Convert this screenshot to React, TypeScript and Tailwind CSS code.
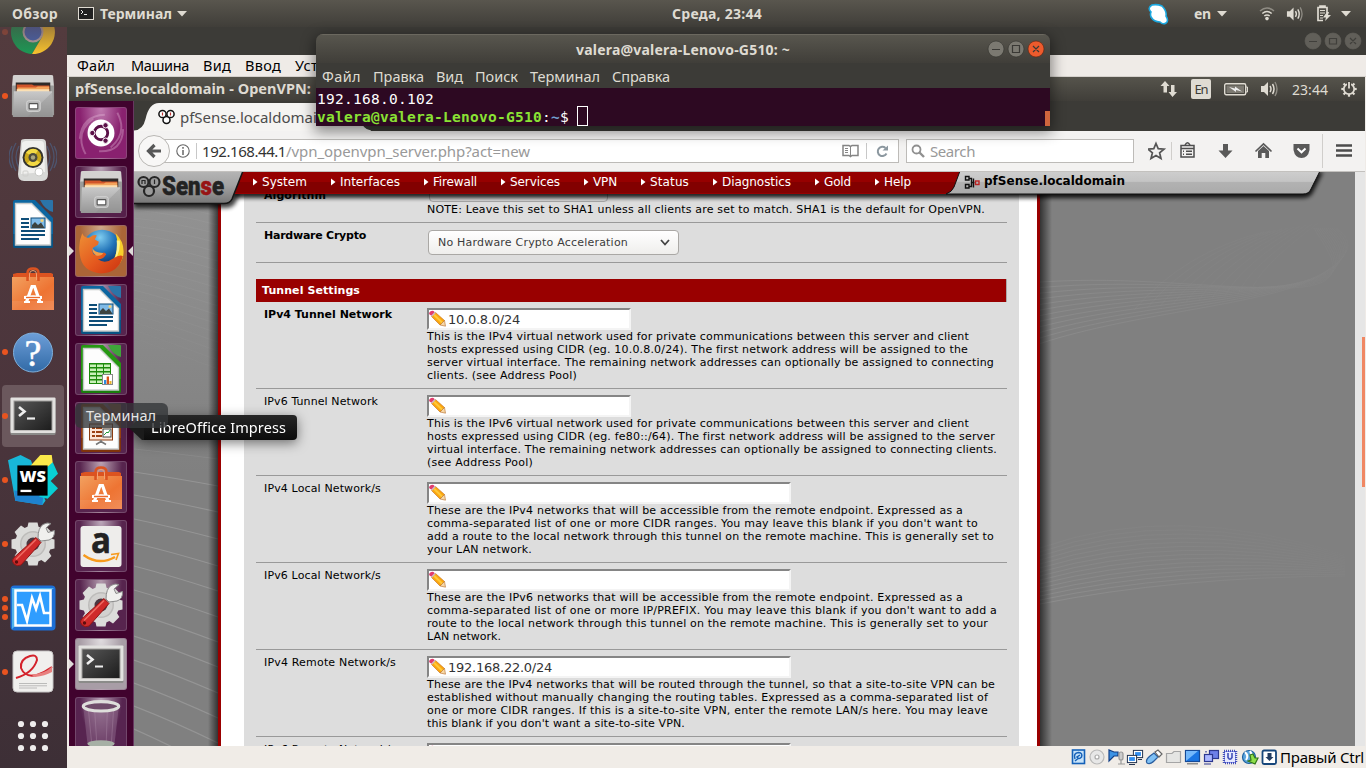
import React, { useLayoutEffect, useRef, useState } from "react";

/** Single line of text that spreads its letters to occupy a given width. */
function Fit({ w, t, className = "" }: { w: number; t: string; className?: string }) {
  const ref = useRef<HTMLSpanElement>(null);
  const [ls, setLs] = useState(0);
  useLayoutEffect(() => {
    if (ref.current) {
      const natural = ref.current.getBoundingClientRect().width;
      setLs((w - natural) / t.length);
    }
  }, []);
  return (
    <span className={"block shrink-0 whitespace-pre " + className} style={{ width: w }}>
      <span ref={ref} style={{ letterSpacing: ls }}>{t}</span>
    </span>
  );
}

const UI = "font-['Noto_Sans',sans-serif]";
const PAGE = "font-['DejaVu_Sans',sans-serif]";

/* ---------- application icons, 48 x 48 ---------- */

function Svg({ s = 44, children }: { s?: number; children: React.ReactNode }) {
  return <svg width={s} height={s} viewBox="0 0 48 48" className="block shrink-0">{children}</svg>;
}

function ChromeIcon() {
  return (
    <Svg s={48}>
      <path d="M24 24 L4.900 13 A22 22 0 0 1 43 13Z" fill="#d9442f" />
      <path d="M24 24 L4.900 13 A22 22 0 0 0 23 46 L33 29Z" fill="#1b9a55" />
      <path d="M43.500 14 H24 L33 29 L23 46 A22 22 0 0 0 43.500 14Z" fill="#f9c52e" />
      <circle cx="24" cy="24" r="10.500" fill="#b9a9a9" />
      <circle cx="24" cy="24" r="8.500" fill="#4767b5" />
    </Svg>
  );
}

function FilesIcon() {
  return (
    <Svg s={46}>
      <defs>
        <linearGradient id="fl" x1="0" y1="0" x2="0" y2="1"><stop offset="0" stopColor="#c9c9c9" /><stop offset="1" stopColor="#969696" /></linearGradient>
      </defs>
      <path d="M3 3 Q3 2 5 2 H43 Q45 2 45 3 L46 15 H2Z" fill="#d3d2d0" />
      <path d="M2 13 H46 V44 H2Z" fill="#9b9b99" />
      <path d="M6 10 H42 V20 H6Z" fill="#2f2a28" />
      <path d="M7 12 H23 L25 13 H41 V20 H7Z" fill="#d2552a" />
      <path d="M8 15 H27 L29 14 H41 V20 H7Z" fill="#f3a35b" />
      <path d="M7 17 H41 V20 H7Z" fill="#fbe0b4" />
      <path d="M4 19 H44 L45 46 H3Z" fill="url(#fl)" />
      <path d="M44 20 V45 L18 46Z" fill="#8b8b8b" opacity=".35" />
      <rect x="17.500" y="29" width="14" height="11" rx="2" fill="#b5b5b5" stroke="#d7d7d7" />
      <rect x="20" y="32" width="9" height="5.500" rx=".8" fill="#fff" stroke="#555" strokeWidth="1.200" />
    </Svg>
  );
}

function SpeakerIcon() {
  return (
    <Svg s={48}>
      <g fill="none" stroke="#4c5d7e" strokeWidth="1.300" opacity=".75">
        <path d="M7 7 Q-1 21 7 35M10 10 Q4 21 10 32M3 10 Q-3 21 3 32M41 7 Q49 21 41 35M38 10 Q44 21 38 32M45 10 Q51 21 45 32" />
      </g>
      <path d="M12 5 Q12 3 16 3 H33 Q37 3 37 7 L39 38 Q39 45 33 45 H15 Q9 45 9 38Z" fill="#d8d9d7" />
      <path d="M13 7 Q14 5 17 5 H32 Q35 5 35 9 L36 36 L12 38Z" fill="#f0f0ee" />
      <circle cx="24" cy="21.500" r="10.500" fill="#35352f" />
      <circle cx="24" cy="21.500" r="8.500" fill="#c9a71b" />
      <path d="M24 21.500 L17 16.500 A8.500 8.500 0 0 1 29 14.500ZM24 21.500 L31 26.500 A8.500 8.500 0 0 1 18 27.500Z" fill="#f2d944" />
      <circle cx="24" cy="21.500" r="4.500" fill="#4c4a3c" /><circle cx="24" cy="21.500" r="2.200" fill="#aaa67e" />
      <circle cx="30" cy="36" r="4" fill="#fff" stroke="#c9cac7" />
      <rect x="14" y="35" width="5" height="5" rx="1" fill="none" stroke="#cfcfcc" />
    </Svg>
  );
}

function DocIcon({ kind }: { kind: "writer" | "calc" | "impress" }) {
  const c = kind === "writer" ? "#0c66a0" : kind === "calc" ? "#259712" : "#97400f";
  const d = kind === "writer" ? "#06466f" : kind === "calc" ? "#14700a" : "#702c08";
  const tab = kind === "writer" ? "#2b74a8" : kind === "calc" ? "#3fa43a" : "#9b5a3a";
  return (
    <Svg s={48}>
      <path d="M6 0 H26 L44 18 V46 Q44 48 42 48 H6 Q4 48 4 46 V2 Q4 0 6 0Z" fill={c} />
      <path d="M4 34 H44 V46 Q44 48 42 48 H6 Q4 48 4 46Z" fill={d} opacity=".6" />
      <path d="M31 0 H43 Q44 0 44 1 V12 Q36 10 31 0Z" fill={tab} />
      <path d="M6.500 3.500 H22.500 L41.500 22.500 V45 H6.500Z" fill="#fdfdfd" stroke="#c6caca" strokeWidth="1.400" />
      {kind === "writer" && (
        <g fill="#0e4d78">
          <path d="M12 18h8v2h-8zM12 22h8v2h-8zM12 26h8v2h-8zM12 30h24v2H12zM12 34h24v2H12zM12 38h18v2H12z" />
          <rect x="22" y="18" width="14" height="10" fill="#7fbbe8" stroke="#0e4d78" />
          <path d="M23 28 V25 L26 22 L29 25 L32 22.500 L35 27 V28Z" fill="#3c4340" /><circle cx="33" cy="20.500" r="1.500" fill="#f0d27a" />
        </g>
      )}
      {kind === "calc" && (
        <g>
          <rect x="12" y="18" width="22" height="21" fill="#1c8a0b" />
          <path d="M13 19.500h6v2.500h-6zM20 19.500h6v2.500h-6zM27 19.500h6v2.500h-6zM13 23.500h6v2.500h-6zM20 23.500h6v2.500h-6zM27 23.500h6v2.500h-6zM13 27.500h6v2.500h-6zM20 27.500h6v2.500h-6zM27 27.500h6v2.500h-6zM13 31.500h6v2.500h-6zM20 31.500h6v2.500h-6zM13 35.500h6v2.500h-6zM20 35.500h6v2.500h-6z" fill="#c8f0b8" />
          <rect x="25.500" y="29.500" width="10" height="10" fill="#fff" stroke="#888" />
          <path d="M27 35h2.300v4H27z" fill="#2d8be0" /><path d="M29.700 31.500H32V39h-2.300z" fill="#d9541a" /><path d="M32.500 36h2v3h-2z" fill="#eab52a" />
        </g>
      )}
      {kind === "impress" && (
        <g>
          <rect x="12.500" y="20" width="23" height="16" fill="#fbe6d6" stroke="#8a3c12" />
          <path d="M15 23h3v2h-3zM15 27h3v2h-3zM15 31h3v2h-3zM19 23h6v2h-6zM19 27h6v2h-6zM19 31h6v2h-6z" fill="#9b4112" />
          <rect x="26" y="25" width="8" height="8" fill="#fff" stroke="#444" /><path d="M27 31l3-3 1 1 2-3" stroke="#259b3c" fill="none" />
          <path d="M24 36v3M24 37.500l-5 3M24 37.500l5 3" stroke="#777" strokeWidth="1.500" fill="none" />
        </g>
      )}
    </Svg>
  );
}

function BagIcon() {
  return (
    <Svg s={48}>
      <defs><linearGradient id="bg" x1="0" y1="0" x2="1" y2="1"><stop offset="0" stopColor="#f2a160" /><stop offset=".6" stopColor="#ee7433" /><stop offset="1" stopColor="#ef834b" /></linearGradient></defs>
      <path d="M4 10 L8 9 H42 L44 10 V16 H4Z" fill="#dc5320" />
      <path d="M3 13 H45 V46 H3Z" fill="url(#bg)" />
      <path d="M3 37 H45 V46 H3Z" fill="#fff" opacity=".08" />
      <path d="M18.500 17 V9 Q18.500 4.500 24 4.500 Q29.500 4.500 29.500 9 V17" fill="none" stroke="#dc5320" strokeWidth="2.500" />
      <path d="M20.500 16 V10 Q20.500 6.500 24 6.500 Q27.500 6.500 27.500 10 V16" fill="none" stroke="#f3a271" strokeWidth="1" />
      <path d="M17.500 38 L23 22.500 H25.500 L31 38" fill="none" stroke="#fff" strokeWidth="3.200" />
      <path d="M15 32 Q24 30.500 33 32 V35 H15Z" fill="#fff" /><path d="M17 33.500h14" stroke="#ec6a2c" strokeWidth="1.300" />
      <path d="M15 38h6M28 38h6" stroke="#fff" strokeWidth="2" />
    </Svg>
  );
}

function HelpIcon() {
  return (
    <Svg s={48}>
      <defs><linearGradient id="hp" x1="0" y1="0" x2="0" y2="1"><stop offset="0" stopColor="#6d9ed8" /><stop offset="1" stopColor="#316aa6" /></linearGradient></defs>
      <circle cx="24" cy="24.500" r="19.500" fill="url(#hp)" stroke="#7fb0dc" />
      <text x="24" y="37.500" fontSize="38" textAnchor="middle" fill="#fff" stroke="#fff" strokeWidth=".5" fontFamily="Liberation Serif">?</text>
    </Svg>
  );
}

function TermIcon() {
  return (
    <Svg s={48}>
      <defs><linearGradient id="tm" x1="0" y1="0" x2="1" y2="1"><stop offset="0" stopColor="#565656" /><stop offset="1" stopColor="#1d1d1d" /></linearGradient></defs>
      <rect x="1.500" y="6" width="45" height="37" rx="1.500" fill="#8b8b89" />
      <rect x="1.500" y="5.500" width="45" height="35.500" rx="1" fill="#e2e1df" />
      <rect x="4.500" y="8.500" width="39" height="30" fill="#9d9c9a" />
      <rect x="5.500" y="9.500" width="37" height="28.500" fill="url(#tm)" />
      <path d="M10 15 L15.500 19.500 L10 24" fill="none" stroke="#eee" strokeWidth="2.600" /><path d="M18 26.500 H26" stroke="#eee" strokeWidth="2.200" />
    </Svg>
  );
}

function WebStormIcon() {
  return (
    <Svg s={50}>
      <path d="M0 5 L12 0 L22 5 L36 44 L33 48 L7 44Z" fill="#18b7d8" />
      <path d="M6 34 L34 38 L33 48 L7 44Z" fill="#1e82cf" />
      <path d="M21 11 L31 0 H42 L43 8 L38 14Z" fill="#fbe94a" />
      <path d="M37 12 L43 7 L48 18 L41 25 L48 32 L38 42 L30 40Z" fill="#08cfd4" />
      <rect x="9" y="10" width="29" height="29" fill="#000" />
      <text x="11" y="26" fontSize="15" fontWeight="800" fill="#fff" textLength="25.500" lengthAdjust="spacingAndGlyphs" fontFamily="Open Sans">WS</text>
      <path d="M12 34.500 H22.500" stroke="#fff" strokeWidth="2.200" />
    </Svg>
  );
}

const teeth = [0, 45, 90, 135, 180, 225, 270, 315];
function ToolsIcon() {
  return (
    <Svg s={48}>
      <g fill="#dcdcda">
        {teeth.map((a) => <path key={a} d="M18 9 L19.500 2.500 H28.500 L30 9Z" transform={`rotate(${a} 24 24)`} />)}
        <circle cx="24" cy="24" r="18" />
      </g>
      <circle cx="24" cy="24" r="13" fill="#bdbcba" /><circle cx="24" cy="24" r="11.500" fill="#d2d1cf" />
      <circle cx="24" cy="24" r="6.500" fill="#4b3841" />
      <path d="M29 18 Q29 8 34 4.500 Q38 2 42 3.500 L37 8 L39 12.500 L45.500 10.500 Q46 18 40 20 L32 21Z" fill="#f0f0ee" stroke="#8b8b8b" />
      <path d="M27 17.500 L32 22.500 L12 45 Q8 47 5 44 Q2 41 4.500 38Z" fill="#cf2a2a" stroke="#8e1717" />
      <path d="M27 19.500 L7 39.500" stroke="#ef6a62" strokeWidth="1.600" /><circle cx="7.500" cy="42" r="1.700" fill="#5d0e0e" />
    </Svg>
  );
}

function VBoxIcon() {
  return (
    <Svg s={48}>
      <rect x="1.500" y="1.500" width="45" height="45" rx="4" fill="#1d6fd6" />
      <path d="M3 4 H45 L40 8 H8 V40 L3 45Z" fill="#4fb3ee" />
      <rect x="6.500" y="6.500" width="35" height="35" fill="#2f9dff" stroke="#fff" strokeWidth="2.500" />
      <path d="M8 21 H13 L18 37 L23 14 L27 25 L31 12 L35 29 H41" fill="none" stroke="#fff" strokeWidth="2.600" />
    </Svg>
  );
}

function PdfIcon() {
  return (
    <Svg s={48}>
      <rect x="4" y="3" width="40" height="41" rx="4" fill="#f0efed" stroke="#c6c4c4" />
      <path d="M7 30 Q24 25 28 12 Q28 6 21 8 Q11 11 12 20 Q16 30 28 27 Q36 24 43 19" fill="none" stroke="#d4232c" strokeWidth="2" />
      <path d="M22 26.500 Q36 26 43 18.500 V24 Q36 28 26 29Z" fill="#e8807f" />
      <path d="M10 35.500h28M10 37.800h28M10 40h18" stroke="#b4b4b4" strokeWidth=".9" />
    </Svg>
  );
}

function AppsIcon() {
  return (
    <Svg s={48}>{[12, 24, 36].map((x) => [12, 24, 36].map((y) => <circle key={x + "-" + y} cx={x} cy={y} r="3.100" fill="#eeecec" />))}</Svg>
  );
}

function UbuntuIcon() {
  return (
    <svg width="52" height="52" viewBox="0 0 52 52" className="block">
      <g fill="none" stroke="#e9bfdc" opacity=".35"><path d="M4 32 Q6 8 30 7M10 48 Q-2 26 18 11M49 22 Q48 46 24 45M43 5 Q54 26 36 41" strokeWidth="2" /></g>
      <circle cx="26" cy="26" r="14" fill="#fff" />
      <circle cx="26" cy="26" r="7" fill="none" stroke="#5b1148" strokeWidth="3" />
      <g fill="#5b1148" stroke="#fff" strokeWidth="1"><circle cx="17" cy="26" r="2.800" /><circle cx="30.700" cy="18" r="2.800" /><circle cx="30.700" cy="34" r="2.800" /></g>
    </svg>
  );
}

function FirefoxIcon() {
  return (
    <Svg s={50}>
      <defs>
        <radialGradient id="ffb" cx=".45" cy=".2" r=".75"><stop offset="0" stopColor="#7fcdf0" /><stop offset=".5" stopColor="#2273b8" /><stop offset="1" stopColor="#0b2a62" /></radialGradient>
        <linearGradient id="ffo" x1="0" y1="0" x2="1" y2="1"><stop offset="0" stopColor="#ee8f35" /><stop offset=".55" stopColor="#e4581e" /><stop offset="1" stopColor="#c9300f" /></linearGradient>
      </defs>
      <circle cx="25" cy="22.500" r="19" fill="url(#ffb)" />
      <path d="M38 7 Q48 17 45 30 Q40 44 26 44 Q35 40 37 30 Q42 20 38 7Z" fill="#f9cf2b" />
      <path d="M42 14 Q43 25 37 33 Q40 21 39 14Z" fill="#fff38a" />
      <path d="M6 7 Q8 12 13 11 Q17 8 20 9 L18 13 L22 15 L21 18 L16 21 Q15 24 17 27 Q20 29 24 27 Q27 24 29 27 Q27 32 21 32 Q28 37 36 31 Q42 27 45 29 Q41 45 24 45.500 Q5 44 3.500 26 Q2 16 6 7Z" fill="url(#ffo)" />
      <path d="M16 21 Q17 25 26 26 Q25 29 20 28.500 Q15 26 16 21Z" fill="#f3a04a" />
    </Svg>
  );
}

function AmazonIcon() {
  return (
    <Svg s={48}>
      <rect x="3.500" y="4" width="41" height="41" rx="3" fill="#eeedeb" />
      <text x="14" y="30.500" textLength="20" lengthAdjust="spacingAndGlyphs" fontSize="36" fontWeight="700" fill="#222" stroke="#222" strokeWidth=".6" fontFamily="Open Sans">a</text>
      <path d="M6.500 33 Q22 44 38 35" fill="none" stroke="#f79a1d" strokeWidth="2.400" /><path d="M34 32.500 L41.500 31.500 L39 38" fill="none" stroke="#f79a1d" strokeWidth="1.600" />
    </Svg>
  );
}

function TrashIcon() {
  return (
    <Svg s={50}>
      <path d="M7 9 L11 44 Q24 51 37 44 L41 9Z" fill="#8a6586" opacity=".55" />
      <path d="M12 12 L15 43M18 13 L20 44M30 13 L29 44M36 12 L34 43" stroke="#b394ae" opacity=".35" />
      <ellipse cx="24" cy="44" rx="13" ry="3.500" fill="#a6b0a5" />
      <ellipse cx="24" cy="8" rx="17" ry="4.500" fill="#6f4c6a" stroke="#dededb" strokeWidth="3" />
    </Svg>
  );
}

/* ---------- small symbols ---------- */

function Caret() {
  return <svg width="10" height="6" className="block shrink-0"><path d="M0 0H10L5 5.500Z" fill="#dfdbd2" /></svg>;
}

function Volume({ w = 18 }: { w?: number }) {
  return (
    <svg width={w} height="16" viewBox="0 0 18 16" className="block shrink-0">
      <path d="M1 5h3l4-4v14l-4-4H1Z" fill="#dfdbd2" />
      <path d="M10 5Q12 8 10 11M12.500 3Q15.500 8 12.500 13" fill="none" stroke="#dfdbd2" strokeWidth="1.500" />
      <path d="M15 1Q19 8 15 15" fill="none" stroke="#8f8c84" strokeWidth="1.400" />
    </svg>
  );
}

function Pencil() {
  return (
    <svg width="18" height="18" viewBox="0 0 18 18" className="block shrink-0">
      <path d="M0 3 Q2 0 4.500 1 L6 2.500 L3 6 L.5 4.500Z" fill="#e23b6d" />
      <path d="M2.500 6.500 L6.500 2.500 L15.500 10.500 L11 15Z" fill="#fba70f" stroke="#c06a1d" strokeWidth=".6" />
      <path d="M5 4.800 L13.300 12.800" stroke="#ffc93a" strokeWidth="2" />
      <path d="M11 15 L15.500 10.500 L16.500 16.200Z" fill="#f7d9a8" stroke="#b36a2a" strokeWidth=".6" />
      <path d="M2.500 6.300 L6.300 2.300" stroke="#cdb9c4" strokeWidth="1.300" />
    </svg>
  );
}

function WinButtons({ active }: { active?: boolean }) {
  const fill = active ? "#7b7971" : "#615f59";
  const ink = active ? "#3a3935" : "#403f3b";
  return (
    <svg width="58" height="18" viewBox="0 0 58 18" className="block">
      <circle cx="9" cy="9" r="8" fill={fill} stroke={active ? "#33322e" : fill} strokeWidth=".6" /><circle cx="29" cy="9" r="8" fill={fill} stroke={active ? "#33322e" : fill} strokeWidth=".6" />
      <circle cx="49" cy="9" r="8" fill={active ? "#ed5b2d" : fill} stroke={active ? "#5e2413" : fill} strokeWidth=".6" />
      <path d={active ? "M5 9.500h8M25.500 5.500h7v7h-7ZM46 6l6 6M52 6l-6 6" : "M5 9.500h8M25.500 6.500h7v5.500h-7ZM46 6l6 6M52 6l-6 6"} fill="none" stroke={ink} strokeWidth="1.200" />
    </svg>
  );
}

function Rings() {
  return (
    <svg width="17" height="16" viewBox="0 0 17 16" className="block shrink-0">
      <g fill="#fff" stroke="#111" strokeWidth="1.500"><circle cx="8.500" cy="11" r="3.500" /><circle cx="4.500" cy="5" r="3.600" /><circle cx="12.500" cy="5" r="3.600" /></g>
      <path d="M4.500 3.500v3M12.500 3.500v3" stroke="#b33" strokeWidth="1.200" />
    </svg>
  );
}

/* ---------- host desktop ---------- */

function TopBar() {
  return (
    <div className={"flex h-[27px] shrink-0 items-center bg-linear-to-b from-[#59564e] to-[#403e39] text-[14px] font-bold text-[#dfdbd2] " + UI}>
      <Fit w={46} t="Обзор" className="ml-3" />
      <svg width="16" height="13" className="ml-5 block"><rect x=".5" y=".5" width="15" height="12" fill="#222" stroke="#dfdbd2" /><path d="M3 3l2 2-2 2M6 7.500h3" stroke="#eee" fill="none" /></svg>
      <Fit w={72} t="Терминал" className="ml-1.5" />
      <div className="ml-[5px]"><Caret /></div>
      <Fit w={90} t="Среда, 23:44" className="ml-[485px]" />
      <svg width="24" height="24" viewBox="0 0 24 24" className="ml-[384px] block"><path d="M6 3Q11 2 16 4Q21 9 20 14Q23 19 20 21Q17 23 14 20Q8 20 5 15Q4 12 5 10Q1 6 6 3Z" fill="#fff" stroke="#1ba8e0" strokeWidth="1.600" /></svg>
      <Fit w={17} t="en" className="ml-6" />
      <div className="ml-1.5"><Caret /></div>
      <svg width="16" height="14" viewBox="0 0 16 14" className="ml-8 block"><g fill="none" stroke="#8f8c84" strokeWidth="1.500"><path d="M1 4Q8-2 15 4" /></g><path d="M3.300 6.500Q8 2.500 12.700 6.500M5.300 9Q8 6.800 10.700 9" fill="none" stroke="#dfdbd2" strokeWidth="1.500" /><circle cx="8" cy="11.600" r="1.800" fill="#dfdbd2" /></svg>
      <div className="ml-[11px]"><Volume w={17} /></div>
      <svg width="16" height="17" viewBox="0 0 16 17" className="ml-[13px] block"><path d="M4 2.500V1h5v1.500h2V8M7 15.500H2v-13h9" fill="none" stroke="#dfdbd2" strokeWidth="1.700" /><path d="M4 5.500h5M4 8h5M4 10.500h3M4 13h3" stroke="#dfdbd2" strokeWidth="1.200" /><path d="M11 7L7 12.500h3L9 16l6-6h-3l1-3Z" fill="#dfdbd2" /></svg>
      <div className="ml-[9px]"><Caret /></div>
    </div>
  );
}

const dock: { icon: React.ReactNode; dots: number; active?: boolean }[] = [
  { icon: <ChromeIcon />, dots: 1 }, { icon: <FilesIcon />, dots: 1 }, { icon: <SpeakerIcon />, dots: 0 },
  { icon: <DocIcon kind="writer" />, dots: 0 }, { icon: <BagIcon />, dots: 0 }, { icon: <HelpIcon />, dots: 1 },
  { icon: <TermIcon />, dots: 1, active: true }, { icon: <WebStormIcon />, dots: 1 }, { icon: <ToolsIcon />, dots: 1 },
  { icon: <VBoxIcon />, dots: 3 }, { icon: <PdfIcon />, dots: 1 }, { icon: <AppsIcon />, dots: 0 },
];

function Dock() {
  return (
    <div className="relative w-[67px] shrink-0 overflow-hidden bg-linear-to-b from-[#533b3e] via-[#4b353c] to-[#3d2f36]">
      <div className="-mt-[27px] flex flex-col">
        {dock.map((d, i) => (
          <div key={i} className="flex h-16 items-center">
            <div className={"relative ml-0.5 flex h-[62px] w-[62px] items-center justify-center rounded-[4px] " + (d.active ? "bg-[#6b585d]" : "")}>
              <div className="absolute left-0 flex flex-col gap-[3px]">
                {Array.from({ length: d.dots }).map((_, k) => <div key={k} className={"size-1.5 rounded-full " + (i === 0 ? "bg-[#9b4a37]" : "bg-[#e95420]")} />)}
              </div>
              {d.icon}
            </div>
          </div>
        ))}
      </div>
      <div className="absolute inset-x-0 top-0 h-7 bg-linear-to-b from-[#533b3e]/50 to-transparent" />
    </div>
  );
}

function StatusBar() {
  return (
    <div className={"flex h-[22px] items-center bg-[#f0ece7] pl-[1003px] text-[15px] text-black " + UI}>
      <svg width="209" height="18" viewBox="0 0 209 18" className="block shrink-0">
        <g strokeWidth="1.200">
          <rect x="2.500" y="2" width="12" height="13.500" fill="#c7e3fa" stroke="#1561b8" strokeWidth="1.600" /><path d="M5 11Q3 5 8.500 4.500Q13 5 11.500 9Q9 12 7 9L10 7M5 13L8 10.500" fill="none" stroke="#1561b8" strokeWidth="1.500" />
          <circle cx="27" cy="9" r="7" fill="#e7e7e7" stroke="#b9b9b9" /><circle cx="27" cy="9" r="2" fill="#fff" stroke="#aaa" />
          <path d="M39 2v11l5-5h4V4h-4Z" fill="#3c92e4" stroke="#143f85" /><rect x="49" y="4" width="4" height="8" rx="2" fill="#ccc" stroke="#999" /><path d="M51 12v4M48 16h7" stroke="#999" />
          <rect x="63.500" y="2.500" width="9" height="7" fill="#2f8df0" stroke="#23334f" /><rect x="64.500" y="3.500" width="7" height="5" fill="none" stroke="#fff" /><rect x="57.500" y="7.500" width="9" height="7" fill="#2f8df0" stroke="#23334f" /><rect x="58.500" y="8.500" width="7" height="5" fill="none" stroke="#fff" /><path d="M59 16.500h6M68 11.500h4" stroke="#23334f" />
          <path d="M77 15Q75 12 80 8L84 5L88 9L84 13Q80 17 77 15Z" fill="#7fc0f4" stroke="#2b5fa0" /><path d="M85 4l3-2 4 4-3 3Z" fill="#fff" stroke="#666" />
          <path d="M96.500 14.500V5.500H102L104 3.500H110.500V14.500Z" fill="#e5e5e3" stroke="#a5a5a5" />
          <rect x="115.500" y="2.500" width="14" height="11" fill="#1a76e4" stroke="#164a97" /><path d="M116 13V3H128Z" fill="#74b8fb" /><path d="M117 15.800h11" stroke="#777" />
          <rect x="139.500" y="2.500" width="9" height="8" fill="#6d7fe8" stroke="#2c378f" /><rect x="134.500" y="6.500" width="8" height="7" fill="#aab6ff" stroke="#2c378f" /><path d="M136 4.500v-1.500M134 16h7" stroke="#2c378f" />
          <rect x="154" y="3" width="12" height="12" fill="#8793f2" stroke="#4450b7" strokeDasharray="1 1" strokeWidth="2.500" /><rect x="155" y="4" width="10" height="10" fill="#e6e9ff" /><path d="M158 5v4.500Q160 13 162 9.500V5" fill="none" stroke="#4450b7" strokeWidth="1.600" />
          <circle cx="179" cy="9" r="6.500" fill="#5da6df" stroke="#1c609f" /><path d="M175 4Q179 8 176 12M180 3l2 4" stroke="#fff" fill="none" strokeWidth="2" /><path d="M180 7l3-1 2 4h3l-3 6-7-3 3-1Z" fill="#8fe04a" stroke="#33761b" />
          <rect x="192.500" y="2.500" width="13.500" height="13.500" rx="1.500" fill="#fff" stroke="#16467b" strokeWidth="1.800" /><path d="M197.500 5h4v4h2l-4 4-4-4h2Z" fill="#223c60" />
        </g>
      </svg>
      <Fit w={84} t="Правый Ctrl" className="ml-px" />
    </div>
  );
}

/* ---------- guest desktop ---------- */

function GuestPanel() {
  return (
    <div className={"flex h-6 shrink-0 items-center bg-linear-to-b from-[#56544c] to-[#403e39] pl-1.5 text-[15px] text-[#dfdbd2] " + UI}>
      <Fit w={236} t="pfSense.localdomain - OpenVPN:" className="font-bold text-[14.5px]" />
      <svg width="20" height="18" viewBox="0 0 20 18" className="ml-[848px] block"><path d="M6 1L1.500 6H4.500V12.500H8V6H10.500ZM13.500 17L9.500 12H12V5H15.500V12H18Z" fill="#dfdbd2" /></svg>
      <div className="ml-[12px] flex h-5 w-5 items-center justify-center rounded-[2px] bg-[#dfdbd2] pt-0.5 text-[#3c3b37]"><Fit w={13} t="En" className="text-[13px]" /></div>
      <svg width="25" height="13" viewBox="0 0 25 13" className="ml-[13px] block"><rect x=".7" y=".7" width="21" height="11" rx="1.500" fill="none" stroke="#dfdbd2" strokeWidth="1.400" /><rect x="2.500" y="2.500" width="17.500" height="7.500" fill="#7d7a72" /><path d="M22 4h1.500v5H22" fill="none" stroke="#dfdbd2" /><path d="M5 4l6 1.500V3.500l7 5-6-1.500v2Z" fill="#eee" /></svg>
      <div className="ml-[10px]"><Volume w={20} /></div>
      <Fit w={36} t="23:44" className="ml-[13px] text-[14px]" />
      <svg width="16" height="16" viewBox="0 0 16 16" className="ml-[13px] block">
        <circle cx="8" cy="8" r="5.200" fill="none" stroke="#dfdbd2" strokeWidth="1.800" />
        <g stroke="#dfdbd2" strokeWidth="2.200">{teeth.slice(1).map((a) => <path key={a} d="M8 2.800V.3" transform={`rotate(${a} 8 8)`} />)}</g>
        <path d="M8 0v6" stroke="#45433d" strokeWidth="4" /><path d="M8 1v6.500" stroke="#dfdbd2" strokeWidth="1.800" />
      </svg>
    </div>
  );
}

const tiles: { icon: React.ReactNode; bg: string }[] = [
  { icon: <UbuntuIcon />, bg: "from-[#c07bb0] to-[#89216f]" },
  { icon: <FilesIcon />, bg: "from-[#b9a4b6] to-[#55204a]" },
  { icon: <FirefoxIcon />, bg: "from-[#cfa98b] to-[#aa6537]" },
  { icon: <DocIcon kind="writer" />, bg: "from-[#a591ae] to-[#57244e]" },
  { icon: <DocIcon kind="calc" />, bg: "from-[#b39cae] to-[#57244e]" },
  { icon: <DocIcon kind="impress" />, bg: "from-[#a08196] to-[#57244e]" },
  { icon: <BagIcon />, bg: "from-[#bca3b3] to-[#57244e]" },
  { icon: <AmazonIcon />, bg: "from-[#bdaabb] to-[#57244e]" },
  { icon: <ToolsIcon />, bg: "from-[#b39cae] to-[#57244e]" },
  { icon: <TermIcon />, bg: "from-[#e0dcdf] to-[#a89da6]" },
  { icon: <TrashIcon />, bg: "from-[#b9a1b6] to-[#572450]" },
];

function Launcher() {
  return (
    <div className="relative w-[65px] shrink-0 overflow-hidden border-r border-[#673760] bg-[#41032e]">
      <div className="flex flex-col gap-[7px] pt-1.5 pl-1.5">
        {tiles.map((t, i) => (
          <div key={i} className={"flex size-[52px] shrink-0 items-center justify-center overflow-hidden rounded-[3px] border border-[#8d6a86]/50 bg-radial-[at_50%_0%] to-60% " + t.bg}>{t.icon}</div>
        ))}
      </div>
      <svg width="64" height="645" className="absolute inset-0"><path d="M0 145L5 150L0 155ZM64 145L59 150L64 155ZM0 558L5 563L0 568Z" fill="#dedbd9" /></svg>
    </div>
  );
}

function Browser() {
  return (
    <div className={"shrink-0 " + UI}>
      <div className="h-[30px] bg-[#3c3b37]">
        <div className="relative">
          <svg width="240" height="30" className="absolute left-0 top-0"><path d="M0 29.500Q9 29 11.500 18Q15 2 25 2H210Q222 2 225 16Q229 29 237 29.500V30H0Z" fill="#f5f4f2" /></svg>
          <div className="relative flex h-8 items-center pl-6 text-[15px] text-[#4c4c4c]"><Rings /><Fit w={146} t="pfSense.localdomain" className="ml-[5px]" /></div>
        </div>
      </div>
      <div className="flex h-[41px] items-center border-b border-[#c3c1be] bg-[#f3f2f1] text-[15px]">
        <div className="relative z-10 ml-1 flex size-8 items-center justify-center rounded-full border border-[#b9b7b4] bg-[#f8f7f6]">
          <svg width="16" height="16" viewBox="0 0 16 16"><path d="M8.500 2L2.500 8L8.500 14M3 8H15" fill="none" stroke="#575757" strokeWidth="3.200" /></svg>
        </div>
        <div className="-ml-2 flex h-6 w-[737px] items-center border border-[#bdbbb8] bg-white pl-[13px]">
          <svg width="14" height="14" viewBox="0 0 14 14" className="block"><circle cx="7" cy="7" r="6.200" fill="none" stroke="#666" strokeWidth="1.100" /><path d="M7 3v1.800M7 6v5" stroke="#666" strokeWidth="1.500" /></svg>
          <div className="ml-[6px] h-4 w-px bg-[#c8c8c8]" />
          <Fit w={84} t="192.168.44.1" className="ml-[5px] text-[#333]" />
          <Fit w={244} t="/vpn_openvpn_server.php?act=new" className="text-[#999]" />
          <svg width="17" height="14" viewBox="0 0 17 14" className="ml-[312px] block"><path d="M1 1.500H7L8.500 2.500L10 1.500H16V11.500H10L8.500 12.500L7 11.500H1Z" fill="none" stroke="#858585" strokeWidth="1.500" /><path d="M8.500 3V12M3 4.500h3M3 6.500h3M3 8.500h3" stroke="#858585" /></svg>
          <div className="ml-[7px] h-4 w-px bg-[#c8c8c8]" />
          <svg width="13" height="13" viewBox="0 0 13 13" className="ml-[9px] block"><path d="M10.500 8.500A4.600 4.600 0 1 1 9.500 3" fill="none" stroke="#8c98a0" strokeWidth="2" /><path d="M6.500 5.500H12V.5Z" fill="#8c98a0" /></svg>
        </div>
        <div className="ml-[7px] flex h-6 w-[228px] items-center border border-[#bdbbb8] bg-white pl-1">
          <svg width="14" height="14" viewBox="0 0 14 14" className="block"><circle cx="5.500" cy="5.500" r="4" fill="none" stroke="#909090" strokeWidth="1.800" /><path d="M8.500 8.500L13 13" stroke="#909090" strokeWidth="2.400" /></svg>
          <Fit w={45} t="Search" className="ml-[5px] text-[#999]" />
        </div>
        <svg width="206" height="34" viewBox="0 0 206 34" className="ml-3.5 block">
          <path d="M8 10L10.200 15.200L16 15.700L11.600 19.300L13 25L8 22L3 25L4.400 19.300L0 15.700L5.800 15.200Z" transform="translate(0,-.5)" fill="none" stroke="#555" strokeWidth="1.700" />
          <path d="M23.500 8v18M174.500 0v34" stroke="#d0cecb" />
          <path d="M33 11.500H46V23H33ZM37 11Q39.500 6.500 42 11M33 14.500h13M35 17.300h1M38 17.300h6M35 20.300h1M38 20.300h6" fill="none" stroke="#4e4e4e" strokeWidth="1.500" />
          <path d="M75 10H80V16.500H84.500L77.500 24L70.500 16.500H75Z" fill="#595959" />
          <path d="M107.500 17.500L115.500 10L123.500 17.500" fill="none" stroke="#595959" strokeWidth="1.700" /><path d="M110 17L115.500 12L121 17V24H117.300V19H113.700V24H110Z" fill="#595959" />
          <path d="M145.500 10H161.500V16Q160 24 153.500 24Q147 24 145.500 16Z" fill="#595959" /><path d="M149.500 14.500L153.500 18.300L157.500 14.500" fill="none" stroke="#fff" strokeWidth="2" />
          <path d="M188 11.500H204M188 16.500H204M188 21.500H204" stroke="#4c4c4c" strokeWidth="2.400" />
        </svg>
      </div>
    </div>
  );
}

const leftLines = [[729, 42], [706, 37], [683, 35], [660, 33], [636, 31], [613, 29], [590, 27], [566, 25], [543, 23], [519, 20], [495, 17], [472, 14], [449, 10], [426, 6]];

function Backdrop() {
  return (
    <svg width="1221" height="574" className="absolute inset-0">
      <defs>
        <linearGradient id="shR" x1="0" x2="1"><stop offset="0" stopColor="#000" stopOpacity=".6" /><stop offset="1" stopColor="#000" stopOpacity="0" /></linearGradient>
        <linearGradient id="topL" x1="0" x2="0" y1="0" y2="1"><stop offset="0" stopColor="#949494" /><stop offset="1" stopColor="#808080" /></linearGradient>
        <linearGradient id="fade" x1="906" x2="1210" y1="0" y2="0" gradientUnits="userSpaceOnUse"><stop offset="0" stopColor="#929292" /><stop offset="1" stopColor="#838383" /></linearGradient>
      </defs>
      <rect width="1221" height="574" fill="#808080" />
      <rect width="84" height="300" fill="url(#topL)" />
      <g fill="none" stroke="#979797" strokeWidth="1">
        {leftLines.map(([y, d], i) => <path key={y} d={`M0 ${y - 172}Q40 ${y - 172 + d * 0.42} 84 ${y - 172 + d}`} strokeWidth="1.200" opacity={i > 11 ? 0.4 : 0.9} />)}
        {Array.from({ length: 19 }).map((_, i) => <path key={i} d={`M0 ${22 + i * 8}Q40 ${24 + i * 8.700} 84 ${35 + i * 9}`} opacity={0.7 - i * 0.03} />)}
      </g>
      <g fill="none" stroke="url(#fade)" strokeWidth=".8">
        {Array.from({ length: 12 }).map((_, i) => <path key={"a" + i} d={`M906 ${110 + i * 5.600}C1000 ${104 + i * 3.300} ${1070 + i * 6} ${116 + i * 1.500} ${1150 + i * 3} ${116 - i}S${1190 + i * 2} ${75 - i} ${1180 + i * 2} 56`} opacity=".7" />)}
        {Array.from({ length: 10 }).map((_, i) => <path key={"b" + i} d={`M${1000 + i * 13} ${138 - i * 2}Q${1050 + i * 8} ${80 + i * 2} ${1130 + i * 6} ${60 - i}`} opacity=".3" />)}
        {Array.from({ length: 15 }).map((_, i) => <path key={"c" + i} d={`M906 ${432 - i * 4}Q${1040} ${405 - i * 5.500} 1211 ${404 - i * 1.500}`} opacity={0.9 - i * 0.045} />)}
      </g>
      <rect x="74" y="20" width="10" height="554" fill="url(#shR)" transform="rotate(180 79 297)" />
      <rect x="906" y="20" width="12" height="554" fill="url(#shR)" />
    </svg>
  );
}

const nav: [string, number][] = [
  ["System", 45], ["Interfaces", 60], ["Firewall", 44], ["Services", 50], ["VPN", 24],
  ["Status", 39], ["Diagnostics", 69], ["Gold", 27], ["Help", 27],
];

function SiteHeader() {
  return (
    <div className={"absolute inset-x-0 top-0 h-10 " + PAGE}>
      <svg width="1221" height="44" className="absolute inset-0">
        <defs>
          <filter id="sh" x="-5%" y="-20%" width="110%" height="180%"><feGaussianBlur stdDeviation="2" /></filter>
          <linearGradient id="gl" x1="0" y1="0" x2="0" y2="1"><stop offset="0" stopColor="#b5b5b5" /><stop offset=".45" stopColor="#a2a2a2" /><stop offset="1" stopColor="#767676" /></linearGradient>
          <linearGradient id="gh" x1="0" y1="0" x2="0" y2="1"><stop offset="0" stopColor="#cecece" /><stop offset=".45" stopColor="#c4c4c4" /><stop offset=".5" stopColor="#b2b2b2" /><stop offset="1" stopColor="#aaaaaa" /></linearGradient>
        </defs>
        <path d="M0 2H112L102 30Q99 36 92 36H0Z" fill="#000" opacity=".75" filter="url(#sh)" />
        <path d="M100 0H1189L1178 22Q1175 26 1168 26H100Z" fill="#000" opacity=".85" filter="url(#sh)" />
        <path d="M100 0H830L815 22H100Z" fill="#960000" /><path d="M100 10H824L815 21H100Z" fill="#820000" />
        <path d="M826-1H1186L1177 17Q1175 22 1169 22H812Q818 20 820 15Z" fill="url(#gh)" stroke="#111" strokeWidth="1" />
        <path d="M-2-1H109L98 27Q96 31.500 90 31.500H-2Z" fill="url(#gl)" stroke="#151515" strokeWidth="1.500" />
        <text x="28" y="23" fontFamily="Roboto" fontWeight="900" fontSize="25" textLength="62" lengthAdjust="spacingAndGlyphs" fill="#222" stroke="#222" strokeWidth=".5"><tspan>Sen</tspan><tspan fill="#971414" stroke="#971414">s</tspan><tspan>e</tspan></text>
        <g fill="#9a9a9a" stroke="#262626" strokeWidth="2.200"><circle cx="15" cy="19" r="5" /><circle cx="9.500" cy="10" r="5" /><circle cx="20.500" cy="10" r="5" /></g>
        <path d="M8 12V8.500h3V12M20.500 7.500v4.500" fill="none" stroke="#262626" strokeWidth="1.200" />
        <g fill="none" stroke="#111" strokeWidth="1.400"><path d="M831.500 4.500h3.500v3.500h-3.500zM831.500 12.500h3.500v3.500h-3.500zM835 6.500h2.500v8H835M837.500 10.500h3M839.500 6.500v9" /><rect x="841.500" y="9" width="3.500" height="3.500" stroke="#b22" /></g>
      </svg>
      <div className="relative flex h-5 items-center pl-[119px] text-[12px] text-white">
        {nav.map(([t, w]) => (
          <div key={t} className="mr-6 flex items-center"><svg width="5" height="8" className="mr-1 block"><path d="M0 .5L4.500 4L0 7.500Z" fill="#fff" /></svg><Fit w={w} t={t} /></div>
        ))}
        <Fit w={141} t="pfSense.localdomain" className="-mt-0.5 ml-[49px] font-bold text-black" />
      </div>
    </div>
  );
}

type Row = { label: string; lw: number; bold?: boolean; value?: string; vw?: number; wide?: boolean; lines: [string, number][] };
const rows: Row[] = [
  { label: "IPv4 Tunnel Network", lw: 128, bold: true, value: "10.0.8.0/24", vw: 72, lines: [
    ["This is the IPv4 virtual network used for private communications between this server and client", 542],
    ["hosts expressed using CIDR (eg. 10.0.8.0/24). The first network address will be assigned to the", 541],
    ["server virtual interface. The remaining network addresses can optionally be assigned to connecting", 567],
    ["clients. (see Address Pool)", 150]] },
  { label: "IPv6 Tunnel Network", lw: 114, lines: [
    ["This is the IPv6 virtual network used for private communications between this server and client", 542],
    ["hosts expressed using CIDR (eg. fe80::/64). The first network address will be assigned to the server", 568],
    ["virtual interface. The remaining network addresses can optionally be assigned to connecting clients.", 570],
    ["(see Address Pool)", 106]] },
  { label: "IPv4 Local Network/s", lw: 117, wide: true, lines: [
    ["These are the IPv4 networks that will be accessible from the remote endpoint. Expressed as a", 536],
    ["comma-separated list of one or more CIDR ranges. You may leave this blank if you don't want to", 551],
    ["add a route to the local network through this tunnel on the remote machine. This is generally set to", 567],
    ["your LAN network.", 105]] },
  { label: "IPv6 Local Network/s", lw: 117, wide: true, lines: [
    ["These are the IPv6 networks that will be accessible from the remote endpoint. Expressed as a", 536],
    ["comma-separated list of one or more IP/PREFIX. You may leave this blank if you don't want to add a", 570],
    ["route to the local network through this tunnel on the remote machine. This is generally set to your", 561],
    ["LAN network.", 74]] },
  { label: "IPv4 Remote Network/s", lw: 132, wide: true, value: "192.168.22.0/24", vw: 104, lines: [
    ["These are the IPv4 networks that will be routed through the tunnel, so that a site-to-site VPN can be", 568],
    ["established without manually changing the routing tables. Expressed as a comma-separated list of", 561],
    ["one or more CIDR ranges. If this is a site-to-site VPN, enter the remote LAN/s here. You may leave", 561],
    ["this blank if you don't want a site-to-site VPN.", 258]] },
  { label: "IPv6 Remote Network/s", lw: 132, wide: true, lines: [] },
];

function Content() {
  return (
    <div className="relative min-h-0 flex-1 overflow-hidden">
      <Backdrop />
      <div className="absolute inset-y-0 right-0 w-2.5 bg-[#e6e6e6]"><div className="mt-[165px] ml-[7px] h-[150px] w-[3px] bg-[#f08763]" /></div>
      <div className={"relative ml-[84px] h-[574px] w-[822px] overflow-hidden border-x-[3px] border-[#990000] bg-white pr-[18px] pl-[23px] text-[11px] leading-[13px] text-black " + PAGE}>
        <div className="h-[600px] bg-[#dddddd] pr-3 pl-3">
          <div className="flex h-[51px] border-b border-[#999999] pl-2">
            <Fit w={62} t="Algorithm" className="mt-[17px] font-bold" />
            <div className="ml-[101px]">
              <div className="ml-0.5 h-[30px] w-[179px] rounded-[4px] border border-[#aaa] bg-[#dedede]" />
              <Fit w={558} t="NOTE: Leave this set to SHA1 unless all clients are set to match. SHA1 is the default for OpenVPN." className="mt-px" />
            </div>
          </div>
          <div className="flex h-10 border-b border-[#999999] pt-1.5 pl-2">
            <Fit w={102} t="Hardware Crypto" className="font-bold" />
            <div className="mt-px ml-[62px] flex h-[25px] w-[251px] items-center justify-between rounded-[4px] border border-[#aaa8a5] bg-linear-to-b from-white to-[#efeeec] pr-2 pl-[9px] text-[#3c3c3c]">
              <Fit w={190} t="No Hardware Crypto Acceleration" />
              <svg width="10" height="7"><path d="M1 1L5 5.500L9 1" fill="none" stroke="#444" strokeWidth="1.800" /></svg>
            </div>
          </div>
          <div className="mt-4 flex h-[23px] items-center border-r border-[#aaa] bg-[#990000] pl-1.5 text-white"><Fit w={98} t="Tunnel Settings" className="font-bold" /></div>
          {rows.map((r) => (
            <div key={r.label} className="flex h-[87px] border-b border-[#999999] pt-1.5 pl-2">
              <div className="w-[163px] shrink-0"><Fit w={r.lw} t={r.label} className={r.bold ? "font-bold" : ""} /></div>
              <div>
                <div className={"flex h-[22px] items-center border-2 border-t-[#858585] border-r-[#f4f4f4] border-b-[#f4f4f4] border-l-[#858585] bg-white text-[13px] text-[#333] " + (r.wide ? "w-[364px]" : "w-[204px]")}>
                  <Pencil />{r.value && <Fit w={r.vw || 0} t={r.value} className="ml-px" />}
                </div>
                {r.lines.map(([t, w]) => <Fit key={t} w={w} t={t} />)}
              </div>
            </div>
          ))}
        </div>
      </div>
      <SiteHeader />
    </div>
  );
}

function VmWindow() {
  return (
    <div className="flex min-w-0 flex-1 flex-col bg-[#efebe7]">
      <div className="flex h-7 shrink-0 items-center justify-end bg-[#3c3b37] pr-1"><WinButtons /></div>
      <div className={"flex h-[22px] shrink-0 items-center border-b border-[#d5d1cc] pl-2.5 text-[14.5px] text-black " + UI}>
        <Fit w={38} t="Файл" /><Fit w={58} t="Машина" className="ml-4" /><Fit w={28} t="Вид" className="ml-[14px]" /><Fit w={36} t="Ввод" className="ml-[14px]" /><Fit w={23} t="Уст" className="ml-[14px]" />
      </div>
      <div className="mr-px ml-0.5 flex h-[669px] shrink-0 flex-col">
        <GuestPanel />
        <div className="flex min-h-0 flex-1">
          <Launcher />
          <div className="flex min-w-0 flex-1 flex-col"><Browser /><Content /></div>
        </div>
      </div>
      <StatusBar />
    </div>
  );
}

function TerminalWindow() {
  return (
    <div className="absolute top-[34px] left-[316px] h-[92px] w-[734px] rounded-t-[7px] shadow-[0_4px_14px_2px_rgba(0,0,0,0.45)]">
      <div className={"h-[92px] overflow-hidden rounded-t-[7px] bg-[#3c3b37] " + UI}>
        <div className="flex h-[29px] items-center border-t border-[#6b685f] bg-linear-to-b from-[#58564e] to-[#403e39] text-[#dfdbd2]">
          <Fit w={214} t="valera@valera-Lenovo-G510: ~" className="ml-[260px] text-[14px] font-bold" />
          <div className="ml-[197px]"><WinButtons active /></div>
        </div>
        <div className="flex h-[25px] items-center pt-0.5 pl-1.5 text-[14.5px] text-[#dfdbd2]">
          <Fit w={39} t="Файл" /><Fit w={51} t="Правка" className="ml-3" /><Fit w={27} t="Вид" className="ml-3" /><Fit w={43} t="Поиск" className="ml-3" /><Fit w={70} t="Терминал" className="ml-3" /><Fit w={58} t="Справка" className="ml-3" />
        </div>
        <div className="relative h-[38px] bg-[#2d0922] pt-0.5 pl-px font-['DejaVu_Sans_Mono',monospace] text-[14.5px] leading-[18px] text-white">
          <Fit w={117} t="192.168.0.102" />
          <div className="flex"><Fit w={225} t="valera@valera-Lenovo-G510" className="font-bold text-[#8ae234]" /><Fit w={9} t=":" /><Fit w={9} t="~" className="font-bold text-[#729fcf]" /><Fit w={9} t="$" /><div className="-mt-0.5 ml-2 h-5 w-[11px] border border-white" /></div>
          <div className="absolute right-0 bottom-0 h-[15px] w-[5px] bg-[#cf653d]" />
        </div>
      </div>
    </div>
  );
}

function Tooltips() {
  return (
    <div className={"text-[14.5px] text-white " + UI}>
      <div className="absolute top-[415px] left-[129px] flex drop-shadow-[0_3px_6px_rgba(0,0,0,0.5)]">
        <svg width="15" height="25" className="block"><path d="M15 0V25H13L0 13L13 0Z" fill="#1b1b1b" /></svg>
        <div className="flex h-[25px] w-[153px] items-center rounded-r-[4px] bg-linear-to-b from-[#262626] to-[#0c0c0c] pl-[7px]"><Fit w={135} t="LibreOffice Impress" /></div>
      </div>
      <div className="absolute top-[403px] left-[75px] flex h-[25px] w-[93px] items-center rounded-[6px] bg-[#34373a]/80 pl-[11px] text-[#e5e5e5]"><Fit w={70} t="Терминал" /></div>
    </div>
  );
}

export default function App() {
  return (
    <div className="relative flex h-[768px] w-[1366px] flex-col overflow-hidden bg-[#3c3b37]">
      <TopBar />
      <div className="flex min-h-0 flex-1"><Dock /><VmWindow /></div>
      <TerminalWindow />
      <Tooltips />
    </div>
  );
}
